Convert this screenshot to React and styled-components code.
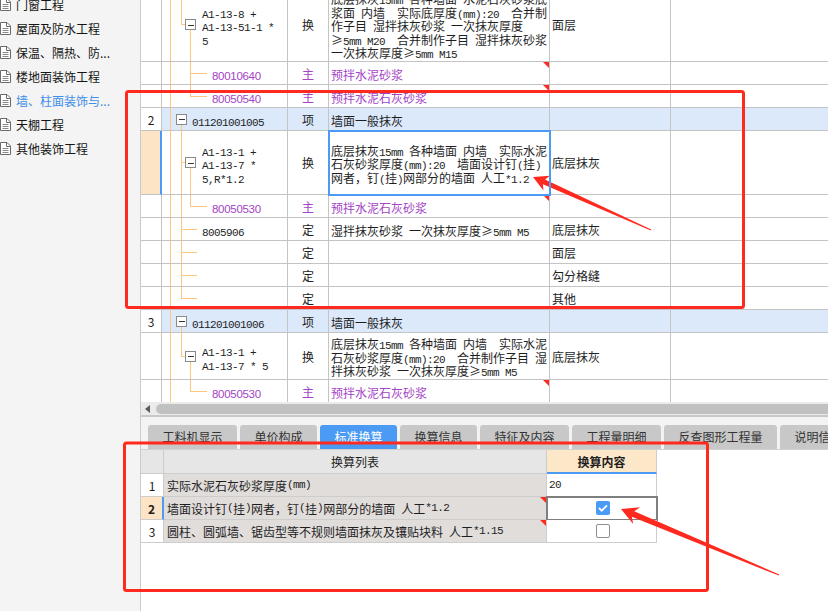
import React from 'react'
import styled, { createGlobalStyle, css } from 'styled-components'

const LINE = '#c4c4c4'
const BLUE = '#4b9bf5'
const PURPLE = '#a444c6'
const GUIDE = '#ffc77d'
const RED = '#ff2a1f'

const GlobalStyle = createGlobalStyle`
	html, body {
		margin: 0;
		padding: 0;
		background: #fff;
		overflow: hidden;
	}
	body {
		font-family: "Noto Sans CJK SC", "Noto Sans", sans-serif;
		font-size: 12px;
		color: #1e1e1e;
	}
`

// ascii runs in a narrow mono face, like the half-width latin of the original grid font
const Asc = styled.span`
	font-family: ${(p) => (p.$sans ? '"Liberation Sans", Arial, sans-serif' : '"Liberation Mono", "DejaVu Sans Mono", monospace')};
	font-size: ${(p) => (p.$sans ? 11.5 : 11)}px;
	letter-spacing: ${(p) => (p.$sans ? '-0.3px' : '-0.6px')};
	line-height: 1;
`
const Mixed = ({ text, sans }) =>
	text.split(/([\x20-\x7e]+)/).map((part, i) =>
		i % 2 ? (
			<Asc key={i} $sans={sans}>
				{part}
			</Asc>
		) : (
			part
		)
	)

const Lines = ({ lines, sans }) => (
	<LineBlock>
		{lines.map((l, i) => (
			<TextLine key={i}>
				<Mixed text={l} sans={sans} />
			</TextLine>
		))}
	</LineBlock>
)

const LineBlock = styled.div`
	line-height: 13.5px;
	padding-top: 3px;
`

const TextLine = styled.div`
	height: 13.5px;
`

/* ---------- sidebar ---------- */

const DocIcon = () => (
	<svg width='11' height='13' viewBox='0 0 11 13'>
		<path d='M0.5 0.5h6.5l3.5 3.5v8.5h-10z' fill='#fff' stroke='#6a6a6a' />
		<path d='M6.5 0.5v4h4' fill='none' stroke='#6a6a6a' />
		<path d='M2.5 6.5h6M2.5 8.5h6M2.5 10.5h6' stroke='#8a8a8a' />
	</svg>
)

const navItems = [
	'门窗工程',
	'屋面及防水工程',
	'保温、隔热、防...',
	'楼地面装饰工程',
	'墙、柱面装饰与...',
	'天棚工程',
	'其他装饰工程',
]

/* ---------- top grid data ---------- */

const FULL = [8, '0%', '100%']
const tree = {
	sub1: { v: [FULL, [19, '0%', '50%'], [28, '50%', '100%']], h: [19, 23], box: 23, indent: 40 },
	matMid: { v: [FULL, [28, '0%', '100%']], h: [28, 45], indent: 50 },
	matEnd: { v: [FULL, [28, '0%', '50%']], h: [28, 45], indent: 50 },
	head: { v: [FULL, [19, '50%', '100%']], box: 14, indent: 30 },
	sub2: { v: [FULL, [19, '0%', '100%'], [28, '50%', '100%']], h: [19, 23], box: 23, indent: 40 },
	mat2: { v: [FULL, [19, '0%', '100%'], [28, '0%', '50%']], h: [28, 45], indent: 50 },
	defMid: { v: [FULL, [19, '0%', '100%']], h: [19, 35], indent: 40 },
	defEnd: { v: [FULL, [19, '0%', '50%']], h: [19, 35], indent: 40 },
	sub3: { v: [FULL, [19, '0%', '50%'], [28, '50%', '100%']], h: [19, 23], box: 23, indent: 40 },
}

const rows = [
	{
		h: 74,
		tree: tree.sub1,
		code: ['A1-13-8 +', 'A1-13-51-1 *', '5'],
		type: '换',
		desc: [
			'底层抹灰15mm 各种墙面 水泥石灰砂浆底 水泥砂',
			'浆面 内墙  实际底厚度(mm):20  合并制',
			'作子目 湿拌抹灰砂浆 一次抹灰厚度',
			'≥5mm M20  合并制作子目 湿拌抹灰砂浆',
			'一次抹灰厚度≥5mm M15',
		],
		part: '面层',
	},
	{ h: 23, tree: tree.matMid, code: ['80010640'], type: '主', desc: ['预拌水泥砂浆'], mat: true },
	{ h: 23, tree: tree.matEnd, code: ['80050540'], type: '主', desc: ['预拌水泥石灰砂浆'], mat: true },
	{ h: 23, head: true, num: '2', tree: tree.head, code: ['011201001005'], type: '项', desc: ['墙面一般抹灰'] },
	{
		h: 64,
		sel: true,
		tree: tree.sub2,
		code: ['A1-13-1 +', 'A1-13-7 *', '5,R*1.2'],
		type: '换',
		desc: [
			'底层抹灰15mm 各种墙面 内墙  实际水泥',
			'石灰砂浆厚度(mm):20  墙面设计钉(挂)',
			'网者，钉(挂)网部分的墙面 人工*1.2',
		],
		part: '底层抹灰',
	},
	{ h: 23, tree: tree.mat2, code: ['80050530'], type: '主', desc: ['预拌水泥石灰砂浆'], mat: true },
	{ h: 23, tree: tree.defMid, code: ['8005906'], type: '定', desc: ['湿拌抹灰砂浆 一次抹灰厚度≥5mm M5'], part: '底层抹灰' },
	{ h: 23, tree: tree.defMid, code: [''], type: '定', desc: [''], part: '面层' },
	{ h: 23, tree: tree.defMid, code: [''], type: '定', desc: [''], part: '勾分格缝' },
	{ h: 23, tree: tree.defEnd, code: [''], type: '定', desc: [''], part: '其他' },
	{ h: 23, head: true, num: '3', tree: tree.head, code: ['011201001006'], type: '项', desc: ['墙面一般抹灰'] },
	{
		h: 47,
		tree: tree.sub3,
		code: ['A1-13-1 +', 'A1-13-7 * 5'],
		type: '换',
		desc: [
			'底层抹灰15mm 各种墙面 内墙  实际水泥',
			'石灰砂浆厚度(mm):20  合并制作子目 湿',
			'拌抹灰砂浆 一次抹灰厚度≥5mm M5',
		],
		part: '底层抹灰',
	},
	{ h: 23, tree: tree.matEnd, code: ['80050530'], type: '主', desc: ['预拌水泥石灰砂浆'], mat: true },
]

const tabs = ['工料机显示', '单价构成', '标准换算', '换算信息', '特征及内容', '工程量明细', '反查图形工程量', '说明信息']

const TreeGuides = ({ spec }) => (
	<Guides shapeRendering='crispEdges'>
		{spec.v.map(([x, a, b], i) => (
			<line key={i} x1={x + 0.5} x2={x + 0.5} y1={a} y2={b} stroke={GUIDE} />
		))}
		{spec.h && <line x1={spec.h[0]} x2={spec.h[1]} y1='50%' y2='50%' stroke={GUIDE} />}
		{spec.box != null && (
			<svg x={spec.box} y='50%' overflow='visible'>
				<rect x='0.5' y='-5' width='10' height='10' fill='#fff' stroke='#8a8a8a' />
				<line x1='2.5' x2='8.5' y1='0.5' y2='0.5' stroke='#333' />
			</svg>
		)}
	</Guides>
)

const arrow = ([tx, ty], [ex, ey], head, wing, notch, shaft, tail) => {
	const L = Math.hypot(ex - tx, ey - ty)
	const ux = (ex - tx) / L
	const uy = (ey - ty) / L
	const p = (a, b) => `${(tx + ux * a - uy * b).toFixed(1)},${(ty + uy * a + ux * b).toFixed(1)}`
	return [p(0, 0), p(head, -wing), p(notch, -shaft), p(L, -tail), p(L, tail), p(notch, shaft), p(head, wing)].join(' ')
}

const App = () => {
	return (
		<Page>
			<GlobalStyle />
			<Sidebar>
				<NavList>
					{navItems.map((t) => (
						<NavItem key={t} $active={t.startsWith('墙')}>
							<DocIcon />
							<span>{t}</span>
						</NavItem>
					))}
				</NavList>
			</Sidebar>
			<Main>
				<GridViewport>
					<Grid>
						{rows.map((r, i) => (
							<TopRow key={i} $h={r.h} $head={r.head}>
								<NumCell $sel={r.sel}>{r.num}</NumCell>
								<TreeCell $indent={r.tree.indent} $purple={r.mat}>
									<TreeGuides spec={r.tree} />
									<Lines lines={r.code} sans={r.mat} />
								</TreeCell>
								<TypeCell $purple={r.mat}>{r.type}</TypeCell>
								<DescCell $purple={r.mat} $flag={r.mat} $active={r.sel}>
									<Lines lines={r.desc} />
								</DescCell>
								<PartCell>{r.part}</PartCell>
								<EndCell />
							</TopRow>
						))}
					</Grid>
				</GridViewport>
				<HScroll>
					<ScrollArrow />
					<Thumb />
				</HScroll>
				<TabBar>
					{tabs.map((t) => (
						<Tab key={t} $active={t === '标准换算'}>
							{t}
						</Tab>
					))}
				</TabBar>
				<BottomPanel>
					<BRow $h={25} $top>
						<BHead />
						<BHead>换算列表</BHead>
						<BHeadHot>换算内容</BHeadHot>
					</BRow>
					<BRow $h={23}>
						<BNum>1</BNum>
						<BName>
							<Mixed text='实际水泥石灰砂浆厚度(mm)' />
						</BName>
						<BValue>
							<Mixed text='20' />
						</BValue>
					</BRow>
					<BRow $h={23}>
						<BNum $sel>2</BNum>
						<BName $flag>
							<Mixed text='墙面设计钉(挂)网者，钉(挂)网部分的墙面 人工*1.2' />
						</BName>
						<BValue $center $sel>
							<Check $on>
								<svg width='10' height='8' viewBox='0 0 10 8'>
									<path d='M1 4l2.7 2.7L9 1.3' fill='none' stroke='#fff' strokeWidth='1.8' />
								</svg>
							</Check>
						</BValue>
					</BRow>
					<BRow $h={23}>
						<BNum>3</BNum>
						<BName $flag>
							<Mixed text='圆柱、圆弧墙、锯齿型等不规则墙面抹灰及镶贴块料 人工*1.15' />
						</BName>
						<BValue $center>
							<Check />
						</BValue>
					</BRow>
				</BottomPanel>
			</Main>
			<Overlay width='828' height='611' viewBox='0 0 828 611'>
				<rect x='126.5' y='91.5' width='617' height='216' rx='2' fill='none' stroke={RED} strokeWidth='3' />
				<rect x='124.5' y='443' width='583' height='147.5' rx='2' fill='none' stroke={RED} strokeWidth='3' />
				<polygon points={arrow([533, 177], [651, 230], 15, 8, 12, 2.6, 0.6)} fill={RED} />
				<polygon points={arrow([621, 509], [779, 575], 17, 9, 13, 3, 0.6)} fill={RED} />
			</Overlay>
		</Page>
	)
}

export default App

const Page = styled.div`
	position: relative;
	display: flex;
	width: 828px;
	height: 611px;
	overflow: hidden;
`

const Sidebar = styled.aside`
	flex: none;
	width: 141px;
	box-sizing: border-box;
	border-right: 1px solid #cbcbcb;
	background: #f4f4f4;
	overflow: hidden;
`

const NavList = styled.ul`
	list-style: none;
	margin: -8px 0 0;
	padding: 0;
`

const NavItem = styled.li`
	height: 24px;
	display: flex;
	align-items: center;
	gap: 5px;
	white-space: nowrap;
	font-size: 12px;
	color: ${(p) => (p.$active ? '#3d8ee8' : '#141414')};
`

const Main = styled.main`
	flex: 1;
	min-width: 0;
	display: flex;
	flex-direction: column;
	background: #fff;
`

const GridViewport = styled.div`
	flex: none;
	height: 402px;
	overflow: hidden;
`

const Grid = styled.div`
	margin-top: -12px;
`

const TopRow = styled.div`
	display: grid;
	grid-template-columns: 21px 126px 41px 221px 121px 1fr;
	height: ${(p) => p.$h}px;
	background: ${(p) => (p.$head ? '#dce9fb' : '#fff')};
`

const Cell = styled.div`
	position: relative;
	box-sizing: border-box;
	min-width: 0;
	display: flex;
	align-items: center;
	overflow: hidden;
	white-space: pre;
	border-right: 1px solid ${LINE};
	border-bottom: 1px solid ${LINE};
	color: ${(p) => (p.$purple ? PURPLE : '#1e1e1e')};
`

const NumCell = styled(Cell)`
	justify-content: center;
	background: ${(p) => (p.$sel ? '#fde4c4' : '#fff')};
	${(p) =>
		p.$sel &&
		css`
			border-right: 2px solid ${BLUE};
		`}
`

const TreeCell = styled(Cell)`
	padding-left: ${(p) => p.$indent}px;
	& > div {
		position: relative;
	}
`

const Guides = styled.svg`
	position: absolute;
	left: 0;
	top: 0;
	width: 100%;
	height: 100%;
	overflow: visible;
	pointer-events: none;
`

const TypeCell = styled(Cell)`
	justify-content: center;
`

const DescCell = styled(Cell)`
	padding-left: 2px;
	${(p) =>
		p.$flag &&
		css`
			&::after {
				content: '';
				position: absolute;
				top: 0;
				right: 0;
				border-top: 6px solid ${RED};
				border-left: 6px solid transparent;
			}
		`}
	${(p) =>
		p.$active &&
		css`
			outline: 2px solid ${BLUE};
			outline-offset: -1px;
			z-index: 1;
		`}
`

const PartCell = styled(Cell)`
	padding-left: 2px;
`

const EndCell = styled(Cell)`
	border-right: none;
`

const HScroll = styled.div`
	flex: none;
	height: 13px;
	display: flex;
	align-items: center;
	gap: 6px;
	padding-left: 4px;
	background: #ebebeb;
	border-bottom: 2px solid #c8c8c8;
`

const ScrollArrow = styled.span`
	width: 0;
	height: 0;
	border-top: 4px solid transparent;
	border-bottom: 4px solid transparent;
	border-right: 5px solid #5c5c5c;
`

const Thumb = styled.div`
	flex: 1;
	height: 10px;
	border-radius: 5px 0 0 5px;
	background: #c1c1c1;
`

const TabBar = styled.div`
	flex: none;
	height: 32px;
	box-sizing: border-box;
	padding: 8px 0 0 7px;
	display: flex;
	align-items: flex-end;
	gap: 3px;
	background: #f3f3f3;
	overflow: hidden;
`

const Tab = styled.div`
	flex: none;
	height: 24px;
	line-height: 24px;
	padding: 0 14.5px;
	border-radius: 3px 3px 0 0;
	font-size: 12px;
	white-space: nowrap;
	background: ${(p) => (p.$active ? BLUE : '#c8c8c8')};
	color: ${(p) => (p.$active ? '#fff' : '#333')};
`

const BottomPanel = styled.div`
	flex: 1;
	background: #fff;
`

const BRow = styled.div`
	display: grid;
	grid-template-columns: 23px 383px 110px;
	height: ${(p) => p.$h}px;
	${(p) =>
		p.$top &&
		css`
			border-top: 1px solid #d2d2d2;
			box-sizing: border-box;
		`}
`

const BCell = styled.div`
	position: relative;
	box-sizing: border-box;
	display: flex;
	align-items: center;
	white-space: pre;
	overflow: hidden;
	border-right: 1px solid #cdcdcd;
	border-bottom: 1px solid #cdcdcd;
	color: #1e1e1e;
`

const BHead = styled(BCell)`
	justify-content: center;
	background: #e6e6e6;
`

const BHeadHot = styled(BCell)`
	justify-content: center;
	background: #fde7c9;
	font-weight: 700;
	border-bottom: 2px solid ${BLUE};
`

const BNum = styled(BCell)`
	justify-content: center;
	background: ${(p) => (p.$sel ? '#fde4c4' : '#fff')};
	font-weight: ${(p) => (p.$sel ? 700 : 400)};
	${(p) =>
		p.$sel &&
		css`
			border-right: 2px solid ${BLUE};
		`}
`

const BName = styled(BCell)`
	padding-left: 3px;
	background: #e1dddb;
	${(p) =>
		p.$flag &&
		css`
			&::after {
				content: '';
				position: absolute;
				top: 0;
				right: 0;
				border-top: 6px solid ${RED};
				border-left: 6px solid transparent;
			}
		`}
`

const BValue = styled(BCell)`
	padding-left: 2px;
	background: #fff;
	justify-content: ${(p) => (p.$center ? 'center' : 'flex-start')};
	${(p) =>
		p.$sel &&
		css`
			outline: 2px solid #7f7f7f;
			outline-offset: -1px;
		`}
`

const Check = styled.span`
	width: 14px;
	height: 14px;
	box-sizing: border-box;
	border-radius: 2px;
	display: inline-flex;
	align-items: center;
	justify-content: center;
	${(p) =>
		p.$on
			? css`
					background: ${BLUE};
			  `
			: css`
					background: #fff;
					border: 1px solid #8e8e8e;
			  `}
`

const Overlay = styled.svg`
	position: absolute;
	left: 0;
	top: 0;
	pointer-events: none;
`
